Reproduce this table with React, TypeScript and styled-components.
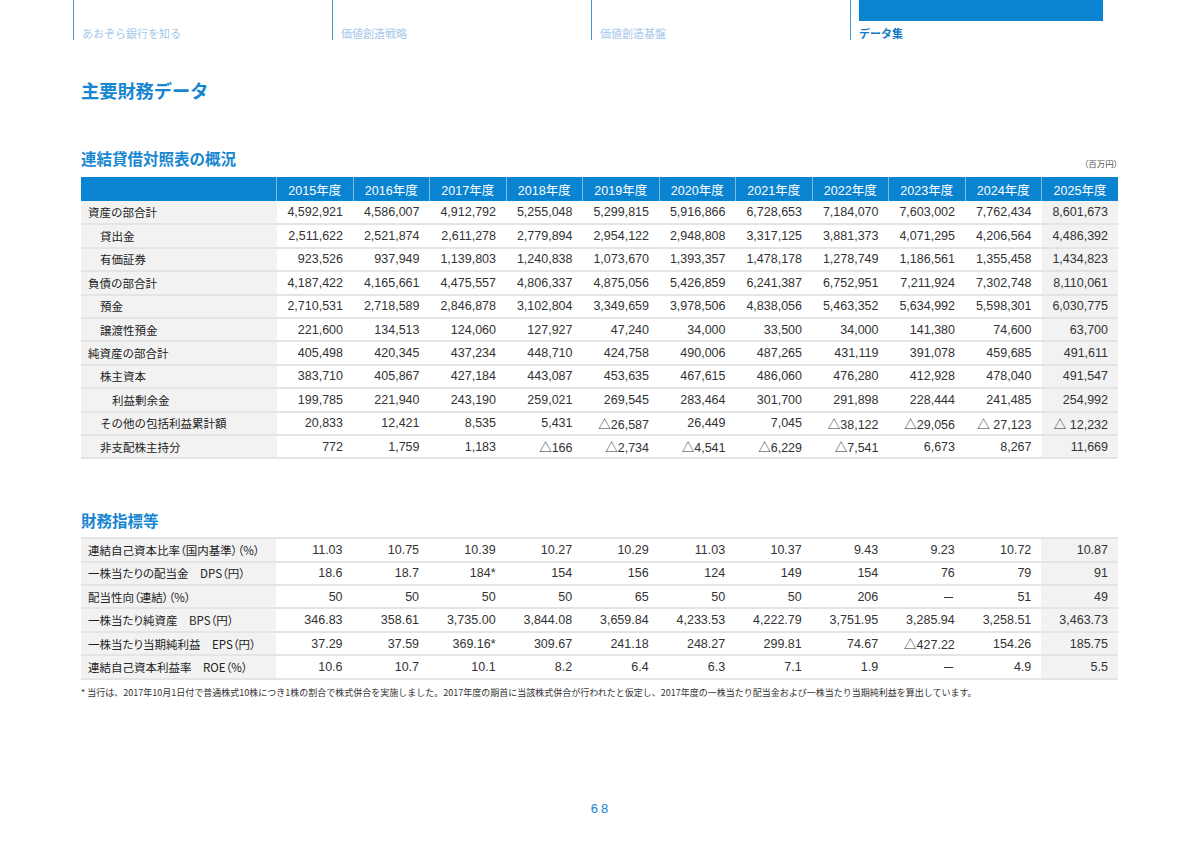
import React from 'react';
import styled, { createGlobalStyle } from 'styled-components';

const GlobalStyle = createGlobalStyle`
  body {
    margin: 0;
    background: #ffffff;
    font-family: "Liberation Sans", "Noto Sans CJK JP", sans-serif;
    color: #222;
  }
`;

const BLUE = '#0a83d1';

const Page = styled.div`
  width: 1200px;
  height: 848px;
  overflow: hidden;
`;

const Nav = styled.nav`
  display: flex;
  margin-left: 73px;
`;

const Tab = styled.div<{ $active?: boolean }>`
  width: 259px;
  height: 40px;
  box-sizing: border-box;
  border-left: 1px solid #3f97d8;
  padding-left: 8px;
  display: flex;
  flex-direction: column;
  justify-content: flex-end;
  font-family: "Noto Sans CJK JP", sans-serif;
  font-size: 11px;
  line-height: 14px;
  color: ${(p) => (p.$active ? '#1479c4' : '#a5c8e9')};
  font-weight: ${(p) => (p.$active ? 700 : 400)};
`;

const ActiveBar = styled.div`
  width: 244px;
  height: 21px;
  background: ${BLUE};
  margin-bottom: auto;
`;

const Content = styled.main`
  padding: 0 82px 0 81px;
`;

const Title = styled.h1`
  margin: 38px 0 0;
  font-family: "Noto Sans CJK JP", sans-serif;
  font-size: 18.2px;
  line-height: 24px;
  font-weight: 700;
  color: #1786d0;
`;

const SectionHead = styled.div<{ $gap: number }>`
  display: flex;
  justify-content: space-between;
  align-items: flex-end;
  margin-top: ${(p) => p.$gap}px;
`;

const SectionTitle = styled.h2`
  margin: 0;
  font-family: "Noto Sans CJK JP", sans-serif;
  font-size: 15.5px;
  line-height: 20px;
  font-weight: 700;
  color: #1786d0;
`;

const Unit = styled.span`
  font-family: "Noto Sans CJK JP", sans-serif;
  font-size: 8.5px;
  line-height: 12px;
  color: #555;
  margin-bottom: -1px;
  font-feature-settings: "palt";
`;

const Table = styled.table<{ $top: number }>`
  width: 100%;
  margin-top: ${(p) => p.$top}px;
  border-collapse: collapse;
  table-layout: fixed;
  border-top: ${(p) => (p.$top < 9 ? '2px solid #e4e4e4' : 'none')};
`;

const HeadCell = styled.th`
  height: 24px;
  padding: 0;
  background: ${BLUE};
  color: #fff;
  font-weight: 400;
  font-size: 12.5px;
  text-align: center;
  border-left: 1px solid #7fbde8;
  &:first-child {
    width: 195px;
    border-left: none;
  }
`;

const Row = styled.tr`
  height: 23.4px;
  border-bottom: 2px solid #e4e4e4;
`;

const LabelCell = styled.td<{ $level: number; $prop?: boolean }>`
  padding: 0 0 0 ${(p) => 7 + p.$level * 12}px;
  background: #f2f2f2;
  font-family: "Noto Sans CJK JP", sans-serif;
  font-size: 11.5px;
  color: #222;
  white-space: nowrap;
  width: 188px;
  font-feature-settings: ${(p) => (p.$prop ? '"palt"' : 'normal')};
`;

const NumCell = styled.td`
  padding: 0 10px 0 0;
  text-align: right;
  font-size: 12.5px;
  color: #333;
  white-space: nowrap;
  &:last-child {
    background: #f2f2f2;
  }
`;

const Footnote = styled.p`
  margin: 7px 0 0;
  font-family: "Noto Sans CJK JP", sans-serif;
  font-size: 9px;
  line-height: 12px;
  color: #333;
  white-space: nowrap;
`;

const PageNumber = styled.div`
  margin-top: 102px;
  text-align: center;
  font-size: 13px;
  line-height: 16px;
  letter-spacing: 3px;
  color: #1786d0;
  padding-left: 3px;
`;

const years = ['2015', '2016', '2017', '2018', '2019', '2020', '2021', '2022', '2023', '2024', '2025'];

type DataRow = { label: string; level: number; values: string[] };

const balance: DataRow[] = [
  { label: '資産の部合計', level: 0, values: ['4,592,921', '4,586,007', '4,912,792', '5,255,048', '5,299,815', '5,916,866', '6,728,653', '7,184,070', '7,603,002', '7,762,434', '8,601,673'] },
  { label: '貸出金', level: 1, values: ['2,511,622', '2,521,874', '2,611,278', '2,779,894', '2,954,122', '2,948,808', '3,317,125', '3,881,373', '4,071,295', '4,206,564', '4,486,392'] },
  { label: '有価証券', level: 1, values: ['923,526', '937,949', '1,139,803', '1,240,838', '1,073,670', '1,393,357', '1,478,178', '1,278,749', '1,186,561', '1,355,458', '1,434,823'] },
  { label: '負債の部合計', level: 0, values: ['4,187,422', '4,165,661', '4,475,557', '4,806,337', '4,875,056', '5,426,859', '6,241,387', '6,752,951', '7,211,924', '7,302,748', '8,110,061'] },
  { label: '預金', level: 1, values: ['2,710,531', '2,718,589', '2,846,878', '3,102,804', '3,349,659', '3,978,506', '4,838,056', '5,463,352', '5,634,992', '5,598,301', '6,030,775'] },
  { label: '譲渡性預金', level: 1, values: ['221,600', '134,513', '124,060', '127,927', '47,240', '34,000', '33,500', '34,000', '141,380', '74,600', '63,700'] },
  { label: '純資産の部合計', level: 0, values: ['405,498', '420,345', '437,234', '448,710', '424,758', '490,006', '487,265', '431,119', '391,078', '459,685', '491,611'] },
  { label: '株主資本', level: 1, values: ['383,710', '405,867', '427,184', '443,087', '453,635', '467,615', '486,060', '476,280', '412,928', '478,040', '491,547'] },
  { label: '利益剰余金', level: 2, values: ['199,785', '221,940', '243,190', '259,021', '269,545', '283,464', '301,700', '291,898', '228,444', '241,485', '254,992'] },
  { label: 'その他の包括利益累計額', level: 1, values: ['20,833', '12,421', '8,535', '5,431', '△26,587', '26,449', '7,045', '△38,122', '△29,056', '△ 27,123', '△ 12,232'] },
  { label: '非支配株主持分', level: 1, values: ['772', '1,759', '1,183', '△166', '△2,734', '△4,541', '△6,229', '△7,541', '6,673', '8,267', '11,669'] },
];

const indicators: DataRow[] = [
  { label: '連結自己資本比率（国内基準）（%）', level: 0, values: ['11.03', '10.75', '10.39', '10.27', '10.29', '11.03', '10.37', '9.43', '9.23', '10.72', '10.87'] },
  { label: '一株当たりの配当金　DPS（円）', level: 0, values: ['18.6', '18.7', '184*', '154', '156', '124', '149', '154', '76', '79', '91'] },
  { label: '配当性向（連結）（%）', level: 0, values: ['50', '50', '50', '50', '65', '50', '50', '206', '－ ', '51', '49'] },
  { label: '一株当たり純資産　BPS（円）', level: 0, values: ['346.83', '358.61', '3,735.00', '3,844.08', '3,659.84', '4,233.53', '4,222.79', '3,751.95', '3,285.94', '3,258.51', '3,463.73'] },
  { label: '一株当たり当期純利益　EPS（円）', level: 0, values: ['37.29', '37.59', '369.16*', '309.67', '241.18', '248.27', '299.81', '74.67', '△427.22', '154.26', '185.75'] },
  { label: '連結自己資本利益率　ROE（%）', level: 0, values: ['10.6', '10.7', '10.1', '8.2', '6.4', '6.3', '7.1', '1.9', '－ ', '4.9', '5.5'] },
];

const tabs = ['あおぞら銀行を知る', '価値創造戦略', '価値創造基盤', 'データ集'];

const DataBody: React.FC<{ rows: DataRow[]; prop?: boolean }> = ({ rows, prop }) => (
  <tbody>
    {rows.map((r) => (
      <Row key={r.label}>
        <LabelCell $level={r.level} $prop={prop}>{r.label}</LabelCell>
        {r.values.map((v, i) => (
          <NumCell key={i}>{v}</NumCell>
        ))}
      </Row>
    ))}
  </tbody>
);

const App: React.FC = () => (
  <Page>
    <GlobalStyle />
    <Nav>
      {tabs.map((t, i) => (
        <Tab key={t} $active={i === 3}>
          {i === 3 && <ActiveBar />}
          {t}
        </Tab>
      ))}
    </Nav>
    <Content>
      <Title>主要財務データ</Title>

      <SectionHead $gap={46}>
        <SectionTitle>連結貸借対照表の概況</SectionTitle>
        <Unit>（百万円）</Unit>
      </SectionHead>
      <Table $top={9}>
        <thead>
          <tr>
            <HeadCell />
            {years.map((y) => (
              <HeadCell key={y}>{y}年度</HeadCell>
            ))}
          </tr>
        </thead>
        <DataBody rows={balance} />
      </Table>

      <SectionHead $gap={51}>
        <SectionTitle>財務指標等</SectionTitle>
      </SectionHead>
      <Table $top={7}>
        <colgroup>
          <col style={{ width: 195 }} />
        </colgroup>
        <DataBody rows={indicators} prop />
      </Table>

      <Footnote>
        * 当行は、2017年10月1日付で普通株式10株につき1株の割合で株式併合を実施しました。2017年度の期首に当該株式併合が行われたと仮定し、2017年度の一株当たり配当金および一株当たり当期純利益を算出しています。
      </Footnote>
      <PageNumber>68</PageNumber>
    </Content>
  </Page>
);

export default App;
